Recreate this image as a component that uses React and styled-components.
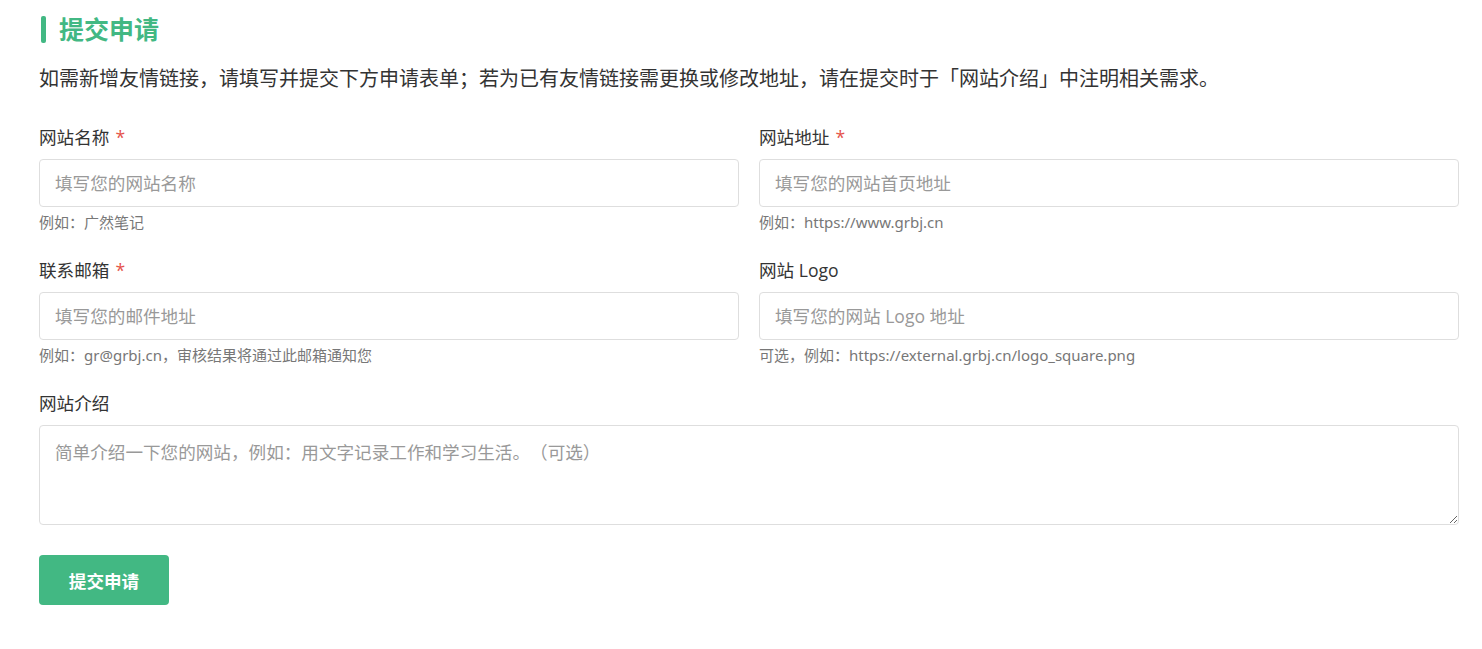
import React from "react";
import styled, { createGlobalStyle } from "styled-components";

const GlobalStyle = createGlobalStyle`
  body {
    margin: 0;
    background: #fff;
    font-family: "Open Sans", "Noto Sans CJK SC", sans-serif;
    color: #333;
    text-spacing-trim: space-all;
  }
`;

const Page = styled.div`
  padding: 13px 23px 40px 39px;
  width: 1420px;
`;

const Title = styled.h2`
  margin: 0;
  display: flex;
  align-items: center;
  gap: 13px;
  font-size: 25px;
  line-height: 32px;
  font-weight: 700;
  color: #42b883;
  &::before {
    content: "";
    display: block;
    width: 5px;
    height: 27px;
    margin-left: 2px;
    border-radius: 2px;
    background: #42b883;
  }
`;

const Intro = styled.p`
  margin: 19px 0 0;
  font-size: 20px;
  line-height: 30px;
  color: #333;
`;

const Grid = styled.div`
  display: grid;
  grid-template-columns: 1fr 1fr;
  column-gap: 20px;
  row-gap: 26px;
  margin-top: 31px;
`;

const Field = styled.div`
  display: flex;
  flex-direction: column;
  grid-column: ${(p) => (p.$wide ? "1 / span 2" : "auto")};
`;

const Label = styled.label`
  font-size: 17.6px;
  line-height: 24px;
  color: #333;
  margin-bottom: 10px;
  span {
    color: #e5534b;
    margin-left: 6px;
  }
`;

const Input = styled.input`
  box-sizing: border-box;
  height: 48px;
  padding: 0 15px;
  border: 1px solid #dedede;
  border-radius: 4px;
  font: inherit;
  font-size: 17.6px;
  color: #333;
  outline: none;
  &::placeholder {
    color: #999;
  }
`;

const TextArea = styled.textarea`
  box-sizing: border-box;
  height: 100px;
  padding: 13px 15px;
  border: 1px solid #dedede;
  border-radius: 4px;
  font: inherit;
  font-size: 17.6px;
  line-height: 26px;
  color: #333;
  outline: none;
  resize: vertical;
  &::placeholder {
    color: #999;
  }
`;

const Hint = styled.div`
  margin-top: 5px;
  font-family: "Noto Sans", "Noto Sans CJK SC", sans-serif;
  font-size: 15px;
  line-height: 20px;
  color: #777;
`;

const Button = styled.button`
  margin-top: 30px;
  width: 130px;
  height: 50px;
  border: none;
  border-radius: 4px;
  background: #42b883;
  color: #fff;
  font: inherit;
  font-size: 17.6px;
  font-weight: 700;
  cursor: pointer;
`;

const fields = [
  { label: "网站名称", required: true, placeholder: "填写您的网站名称", hint: "例如：广然笔记" },
  { label: "网站地址", required: true, placeholder: "填写您的网站首页地址", hint: "例如：https://www.grbj.cn" },
  { label: "联系邮箱", required: true, placeholder: "填写您的邮件地址", hint: "例如：gr@grbj.cn，审核结果将通过此邮箱通知您" },
  { label: "网站 Logo", required: false, placeholder: "填写您的网站 Logo 地址", hint: "可选，例如：https://external.grbj.cn/logo_square.png" },
];

export default function App() {
  return (
    <Page>
      <GlobalStyle />
      <Title>提交申请</Title>
      <Intro>
        如需新增友情链接，请填写并提交下方申请表单；若为已有友情链接需更换或修改地址，请在提交时于「网站介绍」中注明相关需求。
      </Intro>
      <Grid>
        {fields.map((f) => (
          <Field key={f.label}>
            <Label>
              {f.label}
              {f.required && <span>*</span>}
            </Label>
            <Input placeholder={f.placeholder} />
            <Hint>{f.hint}</Hint>
          </Field>
        ))}
        <Field $wide>
          <Label>网站介绍</Label>
          <TextArea placeholder="简单介绍一下您的网站，例如：用文字记录工作和学习生活。（可选）" />
        </Field>
      </Grid>
      <Button>提交申请</Button>
    </Page>
  );
}
